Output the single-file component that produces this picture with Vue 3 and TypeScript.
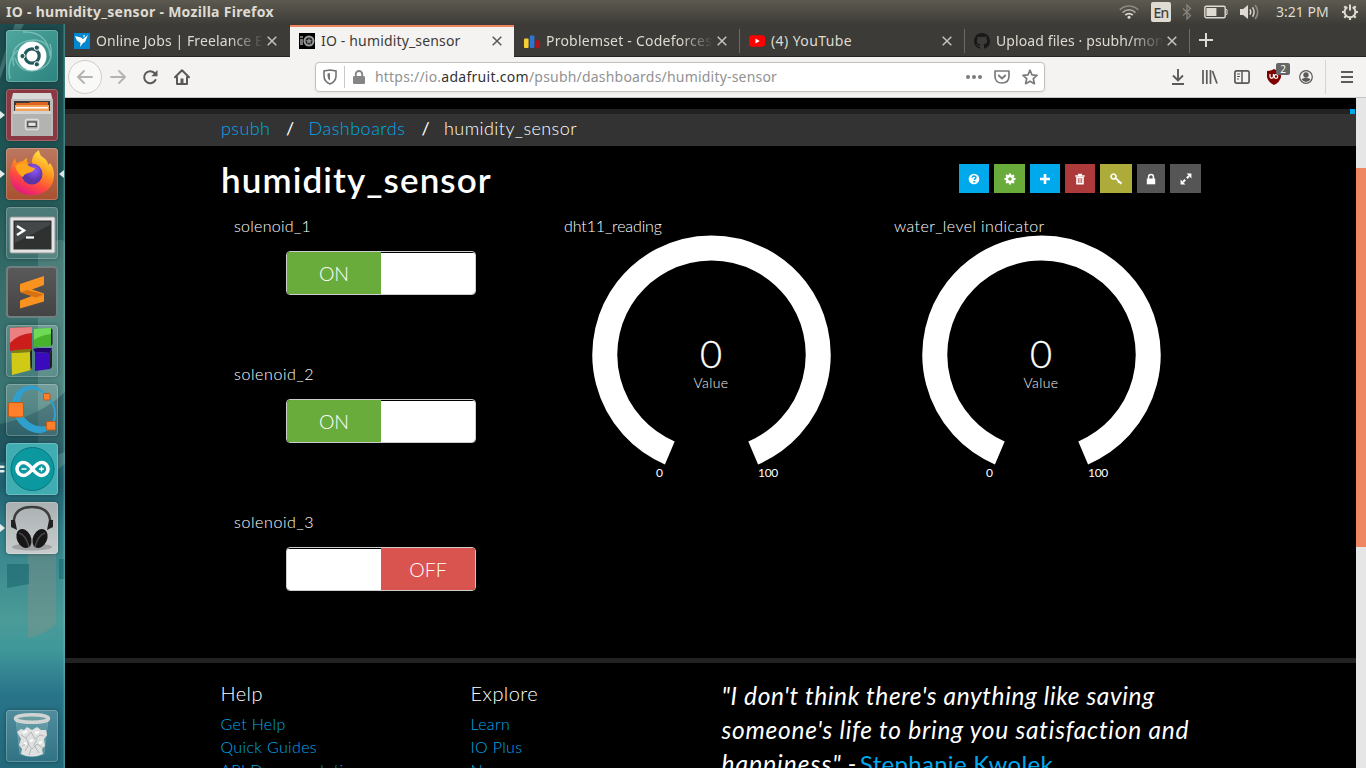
<script setup lang="ts">
interface Tab { title: string; icon: string; active?: boolean; sep?: boolean; fade?: boolean; cls: string }
interface Toggle { name: string; on: boolean }
interface Action { icon: string; cls: string }
interface Gauge { name: string; cls: string }

const tabs: Tab[] = [
  { title: 'Online Jobs | Freelance E', icon: 'freelancer', fade: true, cls: 'snug' },
  { title: 'IO - humidity_sensor', icon: 'io', active: true, cls: 'normal' },
  { title: 'Problemset - Codeforces', icon: 'codeforces', sep: true, fade: true, cls: 'airy' },
  { title: '(4) YouTube', icon: 'youtube', sep: true, cls: 'loose' },
  { title: 'Upload files · psubh/mon', icon: 'github', sep: true, fade: true, cls: 'snug' },
]
const apps = ['dash', 'files', 'firefox', 'terminal', 'sublime', 'blocks', 'octave', 'arduino', 'audio']
const running: Record<string, number> = { files: 1, firefox: 1, arduino: 2, audio: 1 }
const toggles: Toggle[] = [
  { name: 'solenoid_1', on: true },
  { name: 'solenoid_2', on: true },
  { name: 'solenoid_3', on: false },
]
const gauges: Gauge[] = [
  { name: 'dht11_reading', cls: 'tight' },
  { name: 'water_level indicator', cls: 'wide' },
]
const actions: Action[] = [
  { icon: 'help', cls: 'blue w30' },
  { icon: 'gear', cls: 'green w31' },
  { icon: 'plus', cls: 'blue w30' },
  { icon: 'trash', cls: 'red w30' },
  { icon: 'key', cls: 'olive w32' },
  { icon: 'lock', cls: 'grey w28' },
  { icon: 'expand', cls: 'grey w31' },
]
const help = ['Get Help', 'Quick Guides', 'API Documentation']
const explore = ['Learn', 'IO Plus', 'News']
</script>

<template>
  <div class="desktop">
    <header class="panel">
      <span class="win-title">IO - humidity_sensor - Mozilla Firefox</span>
      <div class="tray">
        <svg class="wifi" width="20" height="14" viewBox="0 0 20 14" fill="none" stroke-width="1.7">
          <path d="M.8 4.8a13 13 0 0 1 18.4 0" stroke="#8d8a80" />
          <path d="M3.6 7.6a9 9 0 0 1 12.8 0" stroke="#a9a69d" />
          <path d="M6.3 10.2a5.2 5.2 0 0 1 7.4 0" stroke="#dfdbd2" />
          <circle cx="10" cy="12.2" r="1.5" fill="#dfdbd2" />
        </svg>
        <span class="lang">En</span>
        <svg class="bt" width="10" height="16" viewBox="0 0 10 16" fill="none" stroke="#88857b" stroke-width="1.3"><path d="M1 4.5l7.5 7L5 15V1l3.5 3.5-7.5 7" /></svg>
        <svg class="batt" width="24" height="14" viewBox="0 0 24 14"><rect x=".8" y="1.3" width="20.4" height="11.4" rx="1.5" fill="none" stroke="#dfdbd2" stroke-width="1.4" /><rect x="2.4" y="3" width="10" height="8" fill="#dfdbd2" /><path d="M22.300 4.500h.7v5h-.7" fill="none" stroke="#dfdbd2" /></svg>
        <svg class="vol" width="20" height="18" viewBox="0 0 20 18" fill="none" stroke-width="1.6"><path d="M0 6h3.200L8 2v14l-4.800-4H0z" fill="#dfdbd2" /><path d="M10 6.400q1.600 2.600 0 5.200" stroke="#dfdbd2" /><path d="M12.500 4.200q3.200 4.800 0 9.600" stroke="#c9c5bc" /><path d="M15.200 2q5 7 0 14" stroke="#8d8a80" /></svg>
        <span class="clock">3:21 PM</span>
        <svg class="power" width="18" height="18" viewBox="0 0 18 18" fill="none" stroke="#dfdbd2"><path d="M6.400 4.100a5.400 5.400 0 1 0 5.200 0M9 1.500v6" stroke-width="2" /><path d="M1 9h2.500M14.500 9H17M3.300 3.300l1.700 1.700M14.700 3.300L13 5M3.300 14.700L5 13M14.700 14.700L13 13M9 14.500V17" stroke-width="2.200" /></svg>
      </div>
    </header>

    <div class="workspace">
      <aside class="launcher">
        <svg class="wallpaper" width="65" height="744" viewBox="0 0 65 744" preserveAspectRatio="none">
          <path d="M0 55Q12 20 24 0h-9Q6 22 0 44z" fill="#7fb3ae" opacity=".35" />
          <path d="M38 230q20-20 27-12V440L38 460z" fill="#a9cdc5" opacity=".22" />
          <path d="M0 400q40-8 65-32v60q-30 14-65 10z" fill="#123f4b" opacity=".45" />
          <path d="M28 530h28v70q-14 12-28 14z" fill="#a08f80" opacity=".3" />
          <path d="M7 540h22v20l-22 4zM59 535h6v20h-6z" fill="#1b6870" opacity=".6" />
          <rect x="63.500" width="1.500" height="744" fill="#7cc7c9" opacity=".4" />
        </svg>
        <div v-for="a in apps" :key="a" class="tile" :class="'app-' + a">
          <svg width="52" height="52" viewBox="0 0 52 52">
            <template v-if="a === 'dash'">
              <g fill="none" stroke="#a7dfd6" stroke-width="1.500" opacity=".5"><path d="M8 36Q2 12 28 10q14 0 17 16M44 14q6 24-18 27-13 0-17-13M17 2q25-1 27 24M4 49Q0 30 12 20" /></g>
              <circle cx="26" cy="26" r="14.500" fill="#fff" />
              <circle cx="26" cy="26" r="7.200" fill="none" stroke="#22595a" stroke-width="3.200" />
              <g fill="#22595a" stroke="#fff" stroke-width="1"><circle cx="16.500" cy="26" r="2.600" /><circle cx="30.800" cy="17.700" r="2.600" /><circle cx="30.800" cy="34.300" r="2.600" /></g>
            </template>
            <template v-else-if="a === 'files'">
              <path d="M7 4h38l2 9H5z" fill="#d8d8d6" /><path d="M5 10h42v37H5z" fill="#bcbcba" />
              <path d="M8 12h36v11H8z" fill="#3a3a3a" /><path d="M10 14h13l1-1h18v10H10z" fill="#df6420" /><path d="M9 16h34v7H9z" fill="#f4a25b" /><path d="M10 18h32v1.500H10z" fill="#fff" />
              <path d="M7 22h38v25H7z" fill="#b3b3b1" /><path d="M7 22h38v3H7z" fill="#d3d3d1" />
              <rect x="19.500" y="30.500" width="13" height="10" rx="2" fill="#a9a9a7" stroke="#dededc" stroke-width="1.500" /><rect x="21.800" y="33" width="8.400" height="4.500" fill="#e6e6e4" stroke="#444" stroke-width="1.200" />
            </template>
            <template v-else-if="a === 'firefox'">
              <defs>
                <linearGradient id="ff" x1=".8" y1="0" x2=".3" y2="1"><stop offset="0" stop-color="#fff14a" /><stop offset=".4" stop-color="#ff9a1e" /><stop offset=".7" stop-color="#ff4a3c" /><stop offset="1" stop-color="#e31587" /></linearGradient>
                <radialGradient id="ffg" cx=".6" cy=".3"><stop offset="0" stop-color="#9059ff" /><stop offset="1" stop-color="#5a35a8" /></radialGradient>
              </defs>
              <path d="M9 10q0 3 2 5 3-2 6-2 3-3 4-3-1 4 2 6l3 0q-1-9 7-14 0 5 5 8 4 3 4 7l2-2q4 5 4 12c0 13-10 20-22 20S4 40 4 27q0-9 5-17z" fill="url(#ff)" />
              <circle cx="26" cy="26" r="10.500" fill="url(#ffg)" />
              <path d="M9 18q6-5 12-2 2 3 8 4-1 4-7 5-4 1-5 4-5-2-8-11z" fill="#ffa51c" />
            </template>
            <template v-else-if="a === 'terminal'">
              <rect x="4" y="10" width="45" height="36" rx="1.500" fill="#e4e4e4" stroke="#999" /><rect x="7.500" y="13.500" width="38" height="29" fill="#2f3131" /><path d="M9 15h35v3L9 36z" fill="#444747" />
              <path d="M11 19l7 4.500-7 4.500" fill="none" stroke="#fff" stroke-width="2.500" /><path d="M20 30.500h8" stroke="#fff" stroke-width="2.200" />
            </template>
            <template v-else-if="a === 'sublime'">
              <path d="M14 18l24-8v9l-12 4.500 12 4v8l-24 7v-8l13-5-13-4z" fill="#f9921e" /><path d="M14 26.500l7-2.500 17 4.500-8 3z" fill="#d8710f" />
            </template>
            <template v-else-if="a === 'blocks'">
              <path d="M4 3l22-1v22l-22 2z" fill="#cc1d1d" /><path d="M4 3l22-1v6Q12 9 4 18z" fill="#ea8080" /><path d="M28 4l17-1v18l-17 1z" fill="#47b32d" /><path d="M28 4l17-1v6q-10 1-17 6z" fill="#6ddb58" />
              <path d="M5.500 28l19-1 .500 18L6 50z" fill="#d0ca17" /><path d="M5.500 28l3-3 18-1-2 3z" fill="#827d08" /><path d="M29 27l15 1v16l-15 2z" fill="#3a0bbd" /><path d="M29 27l-2-3 5-1h14l-2 5z" fill="#220471" /><path d="M45 3l1.500 2v14l-1.500 2zM26 24v18l-1.500 3-.5-18zM44 28l2-4v18l-2 2z" fill="#202020" />
            </template>
            <template v-else-if="a === 'octave'">
              <path d="M25 1.500C10 3 4 14 7 27s16 23 28 22c8-1 16-9 15-20 0-12-9-20-17-25-4-2-6-2-8-2.500zm0 4c14-1 23 14 23 24 0 9-5 13-12 13C24 42 15 33 14 22 13 12 18 6 25 5.500z" fill="#2f9fcd" fill-rule="evenodd" />
              <g fill="#ff7f2a" stroke="#c55811"><rect x="2.500" y="18.500" width="15" height="14.500" rx="2" /><rect x="37.500" y="9.500" width="6.500" height="6.500" rx="1" /><rect x="40.500" y="37.500" width="9" height="8.500" rx="1" /></g>
            </template>
            <template v-else-if="a === 'arduino'">
              <circle cx="26.500" cy="26" r="21.500" fill="#0b989f" stroke="#07767d" />
              <path d="M26.500 26c-4-5-6.500-6.500-9-6.500a6.500 6.500 0 0 0 0 13c2.500 0 5-1.500 9-6.500 4-5 6.500-6.500 9-6.500a6.500 6.500 0 0 1 0 13c-2.500 0-5-1.500-9-6.500z" fill="none" stroke="#fff" stroke-width="3.600" />
              <path d="M15.500 26h5M33 26h5M35.500 23.500v5" stroke="#fff" stroke-width="1.400" />
            </template>
            <template v-else>
              <ellipse cx="26" cy="45" rx="20" ry="3.500" fill="#888" opacity=".6" />
              <path d="M7.500 24C7 10 14 5 26 5s19 5 18.500 19" fill="none" stroke="#3d3d3d" stroke-width="2.500" /><path d="M5 18h4l2 10-6-3zM47 18h-4l-2 10 6-3z" fill="#222" />
              <ellipse cx="18" cy="36.500" rx="7" ry="10" transform="rotate(-25 18 36.500)" fill="#171717" /><ellipse cx="34" cy="36.500" rx="7" ry="10" transform="rotate(25 34 36.500)" fill="#171717" />
              <path d="M13 31q7 2 10 14M39 31q-7 2-10 14" stroke="#4a4a4a" fill="none" stroke-width="1.500" />
            </template>
          </svg>
          <svg v-if="running[a]" class="pip" width="5" height="10" viewBox="0 0 5 10" fill="#e4ebea"><path v-if="running[a] === 1" d="M0 1l5 4-5 4z" /><path v-else d="M0 1.500h3.500L5 3 3.500 4H0zM0 6h3.500L5 7 3.500 8.500H0z" /></svg>
          <svg v-if="a === 'firefox'" class="focus" width="5" height="10" viewBox="0 0 5 10" fill="#dce5e4"><path d="M5 1L0 5l5 4z" /></svg>
        </div>
        <div class="tile trash-tile">
          <svg width="52" height="52" viewBox="0 0 52 52">
            <path d="M10 9l4 35q12 5 24 0l4-35z" fill="#8fc0c2" opacity=".35" stroke="#b9d6d6" />
            <path d="M11 22l4-3 3 1 3-3 5 3 5-3 4 3 5 0 1 5-3 4 1 7-3 3 1 5q-11 5-22 0l1-5-3-4 2-6z" fill="#dfe1e0" /><path d="M15 25l5 3 5-6 4 7 5-4 4 1M16 36l5-3 5 6 5-5 6 4M20 28l3 6-4 7M31 29l-3 6 5 8M25 39l-2 6" stroke="#b3b8b7" fill="none" /><path d="M17 23l4-2M29 23l4-1M18 33l3 1M33 33l3-1M24 31l3-1" stroke="#fff" stroke-width="2" />
            <ellipse cx="26" cy="8.500" rx="16.500" ry="3.800" fill="#6b9ba0" stroke="#d0d4d3" stroke-width="3.500" />
          </svg>
        </div>
      </aside>

      <section class="window">
        <nav class="tabs">
          <div v-for="t in tabs" :key="t.title" class="tab" :class="{ active: t.active, sep: t.sep }">
            <svg width="16" height="16" viewBox="0 0 16 16">
              <template v-if="t.icon === 'freelancer'"><path d="M0 0h16v16H0z" fill="#0087cf" /><path d="M1 3l6 1.500L9 6l5-4-3 7-2 1-3 4 .5-4L3 7.500z" fill="#fff" /><path d="M9 2.500l2-.5-1 3z" fill="#fff" /></template>
              <template v-else-if="t.icon === 'io'"><path d="M0 0h16v16H0z" /><path d="M1 3h3v2H1zM1 6h3v6H1z" fill="#777" /><circle cx="10" cy="8" r="4.500" fill="#222" stroke="#999" stroke-width="2" /><path d="M10 5l1 2 2 .3-1.500 1.500.5 2-2-1-2 1 .5-2L7 7.300 9 7z" fill="#888" /></template>
              <template v-else-if="t.icon === 'codeforces'"><rect x="0" y="5.500" width="4.600" height="9.500" rx="1" fill="#f6cf35" /><rect x="5.800" y="2.500" width="4.600" height="12.500" rx="1" fill="#2f74d0" /><rect x="11.500" y="7.500" width="4.500" height="7.500" rx="1" fill="#b31318" /></template>
              <template v-else-if="t.icon === 'youtube'"><rect y="2.300" width="16" height="11.400" rx="3" fill="#f00" /><path d="M6.500 5.500v5L10.700 8z" fill="#fff" /></template>
              <path v-else fill="#191717" d="M8 0C3.580 0 0 3.580 0 8c0 3.540 2.290 6.530 5.470 7.590.4.070.55-.17.55-.38 0-.19-.01-.82-.01-1.490-2.010.37-2.530-.49-2.690-.94-.09-.23-.48-.94-.82-1.130-.28-.15-.68-.52-.01-.53.63-.01 1.080.58 1.230.82.72 1.210 1.870.87 2.330.66.07-.52.28-.87.51-1.070-1.780-.2-3.640-.89-3.640-3.950 0-.87.31-1.590.82-2.150-.08-.2-.36-1.020.08-2.120 0 0 .67-.21 2.200.82.64-.18 1.320-.27 2-.27s1.360.09 2 .27c1.530-1.040 2.200-.82 2.200-.82.44 1.100.16 1.920.08 2.120.51.56.82 1.270.82 2.150 0 3.070-1.870 3.750-3.650 3.950.29.25.54.73.54 1.480 0 1.070-.01 1.930-.01 2.200 0 .21.15.46.55.38A8.013 8.013 0 0 0 16 8c0-4.420-3.580-8-8-8z" />
            </svg>
            <span class="tab-title" :class="[t.cls, { fade: t.fade }]">{{ t.title }}</span>
            <svg class="close" width="10" height="10" viewBox="0 0 10 10" fill="none" stroke="currentColor" stroke-width="1.500"><path d="M.7.700l8.600 8.600M9.300.700L.7 9.300" /></svg>
          </div>
          <svg class="new-tab" width="14" height="14" viewBox="0 0 14 14" stroke="#dfdbd2" stroke-width="2"><path d="M7 0v14M0 7h14" /></svg>
        </nav>

        <div class="toolbar">
          <span class="back"><svg width="16" height="16" viewBox="0 0 16 16" fill="none" stroke="#b5b3b0" stroke-width="1.800" stroke-linecap="round" stroke-linejoin="round"><path d="M15 8H1.500M7 2L1 8l6 6" /></svg></span>
          <svg class="fwd" width="16" height="16" viewBox="0 0 16 16" fill="none" stroke="#b5b3b0" stroke-width="1.800" stroke-linecap="round" stroke-linejoin="round"><path d="M1 8h13.500M9 2l6 6-6 6" /></svg>
          <svg class="reload" width="16" height="16" viewBox="0 0 16 16" fill="none" stroke="#5b5a58" stroke-width="2" stroke-linecap="round"><path d="M13.500 11A6 6 0 1 1 12.500 4" /><path d="M15.500 1v6.200H9.300z" fill="#5b5a58" stroke="none" /></svg>
          <svg class="home" width="16" height="16" viewBox="0 0 16 16" fill="none" stroke="#5b5a58" stroke-width="2" stroke-linejoin="round" stroke-linecap="round"><path d="M1 8.200L8 1.200l7 7M3 8v7h10V8" /><path d="M6.500 9.500h3V14h-3z" fill="#5b5a58" stroke="none" /></svg>
          <div class="url">
            <svg class="shield" width="14" height="16" viewBox="0 0 14 16" fill="none" stroke="#747474" stroke-width="1.600"><path d="M7 1Q10 1.500 13 2v5q0 5.500-6 8-6-2.500-6-8V2Q4 1.500 7 1z" /><path d="M7 4v7.500Q4.500 10 4.500 7V4.500z" fill="#747474" stroke="none" /></svg>
            <i class="bar"></i>
            <svg class="padlock" width="12" height="14" viewBox="0 0 12 14"><rect y="6" width="12" height="8" rx="1.300" fill="#858585" /><path d="M2.800 7V4.200a3.200 3.200 0 0 1 6.400 0V7" fill="none" stroke="#858585" stroke-width="1.900" /></svg>
            <span class="addr">https://io.<b>adafruit.com</b>/psubh/dashboards/humidity-sensor</span>
            <svg class="dots" width="16" height="4" viewBox="0 0 16 4" fill="#7b7b7b"><circle cx="2" cy="2" r="2" /><circle cx="8" cy="2" r="2" /><circle cx="14" cy="2" r="2" /></svg>
            <svg class="pocket" width="16" height="14" viewBox="0 0 16 14" fill="none" stroke="#7b7b7b" stroke-linecap="round" stroke-linejoin="round"><path d="M1 1h14v5q0 7-7 7T1 6z" stroke-width="1.700" /><path d="M4.800 5.500L8 8.500l3.200-3" stroke-width="1.900" /></svg>
            <svg class="star" width="16" height="16" viewBox="0 0 16 16" fill="none" stroke="#7b7b7b" stroke-width="1.700" stroke-linejoin="round"><path d="M8 1.200l2 4.600 5 .5-3.700 3.400 1.100 5L8 12.200l-4.400 2.500 1.100-5L1 6.300l5-.5z" /></svg>
          </div>
          <svg class="dl" width="14" height="16" viewBox="0 0 14 16" fill="none" stroke="#5b5a58" stroke-width="1.900"><path d="M7 0v11M2 6.500l5 5 5-5M1 15h12" /></svg>
          <svg class="lib" width="16" height="14" viewBox="0 0 16 14" fill="none" stroke="#5b5a58" stroke-width="1.700"><path d="M1 0v14M4.800 0v14M8.500 0v14M10.500 1L15 13.500" /></svg>
          <svg class="side" width="16" height="14" viewBox="0 0 16 14" fill="none" stroke="#5b5a58"><rect x=".9" y=".9" width="14.200" height="12.200" rx="1.800" stroke-width="1.700" /><path d="M8 1v12" stroke-width="1.500" /><path d="M3 4h3M3 6.500h3M3 9h2" stroke-width="1" /></svg>
          <span class="ublock">
            <svg width="14" height="16" viewBox="0 0 14 16"><path d="M7 0q3 2 7 2v6q-1 5-7 8-6-3-7-8V2q4 0 7-2z" fill="#800000" /><path d="M3 5v2.500a1.700 1.700 0 0 0 3.400 0V5" fill="none" stroke="#fff" stroke-width="1.200" /><circle cx="9" cy="7.500" r="1.800" fill="none" stroke="#fff" stroke-width="1.200" /></svg>
            <em>2</em>
          </span>
          <svg class="acct" width="14" height="14" viewBox="0 0 14 14"><circle cx="7" cy="7" r="6.300" fill="none" stroke="#5b5a58" stroke-width="1.200" /><circle cx="7" cy="5" r="2.700" fill="#5b5a58" /><path d="M2.500 9.300q2-1.800 4.500-1.300 2.500-.5 4.500 1.300-1.500 2.700-4.500 2.700T2.500 9.300z" fill="#5b5a58" /></svg>
          <i class="tsep"></i>
          <svg class="menu" width="12" height="12" viewBox="0 0 12 12" stroke="#5b5a58" stroke-width="1.800"><path d="M0 1h12M0 6h12M0 11h12" /></svg>
        </div>

        <div class="viewport">
          <main class="page">
            <div class="rule"><i></i></div>
            <div class="crumbs"><a class="c1">psubh</a><span class="slash">/</span><a class="c2">Dashboards</a><span class="slash">/</span><span class="here">humidity_sensor</span></div>
            <div class="head">
              <h1>humidity_sensor</h1>
              <div class="actions">
                <button v-for="(b, i) in actions" :key="i" :class="b.cls">
                  <svg width="12" height="12" viewBox="0 0 12 12" fill="#fff">
                    <template v-if="b.icon === 'help'"><circle cx="6" cy="6" r="5.300" /><path d="M4 4.600q.3-1.600 2-1.600t2 1.500c0 1-1.700 1.200-1.700 2.600M5.300 8.800h2" fill="none" stroke="#00a9ec" stroke-width="1.500" /></template>
                    <template v-else-if="b.icon === 'gear'"><circle cx="6" cy="6" r="3" fill="none" stroke="#fff" stroke-width="2.400" /><path d="M6 .5v2M6 9.500v2M.5 6h2M9.500 6h2M2.100 2.100l1.400 1.400M8.500 8.500l1.400 1.400M2.100 9.900l1.400-1.400M8.500 3.500l1.400-1.400" stroke="#fff" stroke-width="2.200" /></template>
                    <path v-else-if="b.icon === 'plus'" d="M4.700 1h2.600v3.700H11v2.600H7.300V11H4.700V7.300H1V4.700h3.700z" />
                    <template v-else-if="b.icon === 'trash'"><path d="M1.300 2.200h9.400v1.500H1.300zM4 .8h4v1.500H4zM2.200 4h7.600v7.500H2.200z" /><path d="M4.300 5v5M6 5v5M7.700 5v5" stroke="#ad3a3a" stroke-width=".8" /></template>
                    <path v-else-if="b.icon === 'key'" d="M5.200 4.800l6.100 5.500M7.900 9.600l1.600-1.700M10 11l1.500-1.600M3.500 1a2.500 2.500 0 1 0 .1 0z" fill="none" stroke="#fff" stroke-width="1.600" />
                    <template v-else-if="b.icon === 'lock'"><rect x="1.800" y="5.500" width="8.400" height="5.800" /><path d="M3.600 6V3.800a2.400 2.400 0 0 1 4.800 0V6" fill="none" stroke="#fff" stroke-width="1.500" /></template>
                    <template v-else><path d="M11.400.600v4.800L6.600.600zM.6 11.400V6.600l4.800 4.800z" /><path d="M3 9l2.200-2.200M6.800 5.200L9 3" stroke="#fff" stroke-width="2" /></template>
                  </svg>
                </button>
              </div>
            </div>

            <div class="board">
              <div class="col">
                <div v-for="(t, i) in toggles" :key="t.name" class="block">
                  <p class="label" :class="i ? 'roomy' : 'close-set'">{{ t.name }}</p>
                  <div class="toggle">
                    <span :class="t.on ? 'on' : 'blank'">{{ t.on ? 'ON' : '' }}</span>
                    <span :class="t.on ? 'blank' : 'off'">{{ t.on ? '' : 'OFF' }}</span>
                  </div>
                </div>
              </div>
              <div v-for="g in gauges" :key="g.name" class="col">
                <p class="label" :class="g.cls">{{ g.name }}</p>
                <div class="gauge">
                  <svg width="240" height="240" viewBox="0 0 240 240"><path d="M78.800 217.900A106.700 106.700 0 1 1 162.200 217.900" fill="none" stroke="#fff" stroke-width="25" /></svg>
                  <div class="reading"><strong>0</strong><span>Value</span></div>
                  <div class="range"><span>0</span><span>100</span></div>
                </div>
              </div>
            </div>

            <div class="rule"></div>
            <footer class="foot">
              <div class="links"><h4>Help</h4><a v-for="l in help" :key="l">{{ l }}</a></div>
              <div class="links"><h4>Explore</h4><a v-for="l in explore" :key="l">{{ l }}</a></div>
              <blockquote>
                <div class="q1">"I don't think there's anything like saving</div>
                <div class="q2">someone's life to bring you satisfaction and</div>
                <div class="q3"><span>happiness"</span><span class="hyphen">-</span><a>Stephanie Kwolek</a></div>
              </blockquote>
            </footer>
          </main>
          <div class="scroll"><i></i></div>
        </div>
      </section>
    </div>
  </div>
</template>

<style>
body { margin: 0; overflow: hidden; background: #000; }
</style>
<style scoped>
.desktop { width: 1366px; height: 768px; overflow: hidden; display: flex; flex-direction: column; font-family: "Noto Sans", "Open Sans", sans-serif; }
.desktop * { box-sizing: border-box; }
.desktop svg { display: block; flex: none; }
.panel { height: 24px; flex: none; display: flex; justify-content: space-between; padding: 0 7px 0 6px; background: linear-gradient(#5c5a50, #3d3c37); color: #dfdbd2; }
.win-title { font-size: 14px; font-weight: 700; line-height: 24px; white-space: nowrap; letter-spacing: .29px; }
.tray { display: flex; align-items: center; }
.lang { margin-left: 12px; width: 20px; height: 20px; border-radius: 2px; background: #dfdbd2; color: #3c3b37; font-size: 14px; line-height: 21px; text-align: center; letter-spacing: -.8px; -webkit-text-stroke: .2px #3c3b37; }
.bt { margin-left: 11px; }
.batt { margin-left: 12px; }
.vol { margin-left: 12px; }
.clock { margin-left: 16px; width: 53px; font-size: 14px; line-height: 24px; white-space: nowrap; }
.power { margin-left: 12px; }

.workspace { display: flex; flex: 1; min-height: 0; }
.launcher { position: relative; width: 65px; flex: none; display: flex; flex-direction: column; gap: 7px; padding: 6px 0 6px 6px; background: linear-gradient(#1d4a4c 0, #1f5655 20%, #386f6c 36%, #3a7573 51%, #206070 62%, #34808a 68%, #4b9b98 80%, #40989a 84%, #29748a 90%, #22697a 100%); }
.wallpaper { position: absolute; inset: 0; }
.tile { position: relative; width: 52px; height: 52px; flex: none; border-radius: 4px; background: linear-gradient(#ffffff30, #ffffff10); box-shadow: inset 0 0 0 1px #ffffff38, 0 0 4px #0005; }
.app-dash { background: linear-gradient(135deg, #4fa79f, #2d847f); }
.app-files { background: #8a3943; }
.app-firefox { background: linear-gradient(#bb7860, #a8512f); }
.app-sublime { background: linear-gradient(#5a5a5a, #434343); box-shadow: inset 0 0 0 2px #6e8180; }
.app-arduino { background: #3fadb1; }
.app-audio { background: linear-gradient(#a9b0b1, #c8cccd); }
.trash-tile { margin-top: auto; }
.pip { position: absolute; left: -6px; top: 21px; }
.focus { position: absolute; left: 53px; top: 21px; }

.window { flex: 1; min-width: 0; display: flex; flex-direction: column; }
.tabs { height: 33px; flex: none; display: flex; background: #3c3b37; border-bottom: 1px solid #262522; }
.tab { position: relative; width: 225px; height: 32px; display: flex; align-items: center; padding: 2px 13px 0 9px; color: #dfdbd2; }
.tab.sep::after { content: ""; position: absolute; right: 0; top: 5px; width: 1px; height: 24px; background: #6c6b67; }
.tab.active { width: 224px; height: 32px; margin: 1px 1px 0 0; padding: 0 12px 2px 9px; color: #3c3b37; background: #f4f3f2; border-top: 2px solid #f0835a; }
.tab-title { margin-left: 6px; width: 166px; overflow: hidden; white-space: nowrap; font-size: 14px; line-height: 20px; }
.snug { letter-spacing: .1px; }
.normal { letter-spacing: .16px; }
.airy { letter-spacing: .22px; }
.loose { letter-spacing: .4px; }
.fade { mask-image: linear-gradient(90deg, #000 134px, transparent 168px); }
.close { margin-left: auto; opacity: .85; }
.new-tab { margin: 9px 0 0 9px; }

.toolbar { height: 41px; flex: none; display: flex; align-items: center; background: #f4f3f2; border-bottom: 1px solid #c6c4c1; padding-left: 3px; }
.back { width: 34px; height: 34px; border: 1px solid #cfcdca; border-radius: 50%; display: grid; place-items: center; background: #f9f9f8; }
.fwd { margin-left: 8px; }
.reload { margin-left: 16px; }
.home { margin-left: 16px; }
.url { width: 730px; height: 30px; margin-left: 125px; display: flex; align-items: center; background: #fff; border: 1px solid #c3c1be; border-radius: 4px; box-shadow: 0 1px 3px #0001; padding-left: 7px; }
.bar { width: 1px; height: 22px; background: #c9c9c9; margin-left: 7px; }
.padlock { margin-left: 8px; }
.addr { margin-left: 10px; width: 582px; font-size: 14px; color: #929292; white-space: nowrap; line-height: 22px; letter-spacing: .2px; }
.addr b { font-weight: 400; color: #333; letter-spacing: .28px; }
.dots { margin-left: 9px; }
.pocket { margin-left: 12px; }
.star { margin-left: 12px; }
.dl { margin-left: 126px; }
.lib { margin-left: 17px; }
.side { margin-left: 16px; }
.ublock { position: relative; margin-left: 17px; }
.ublock em { position: absolute; left: 9px; top: -6px; width: 14px; height: 12px; border-radius: 2px; background: #666; color: #fff; font: 10px/12px "Noto Sans", sans-serif; text-align: center; }
.acct { margin-left: 18px; }
.tsep { width: 1px; height: 34px; background: #d6d4d1; margin-left: 12px; }
.menu { margin-left: 15px; }

.viewport { flex: 1; display: flex; min-height: 0; }
.page { flex: 1; background: #000; padding-top: 11px; overflow: hidden; font-family: Lato, sans-serif; font-weight: 300; color: #fff; }
.scroll { width: 10px; background: #e6e6e6; padding-top: 70px; }
.scroll i { display: block; height: 379px; background: #f08763; }
.rule { height: 5px; background: #222; }
.rule i { display: block; width: 5px; height: 5px; margin-left: auto; margin-right: 1px; background: #00a9ec; }
.page a { color: #00a9ec; }
.crumbs { height: 32px; background: #333; padding-left: 156px; display: flex; font-size: 18px; line-height: 29px; letter-spacing: .43px; }
.crumbs a, .here { flex: none; }
.c1 { width: 65px; }
.c2 { width: 113px; letter-spacing: .5px; }
.slash { width: 22.5px; font-weight: 400; }
.head { height: 60px; display: flex; justify-content: space-between; padding: 0 155px 0 156px; }
h1 { margin: 0; font: 600 35px/66px Lato, sans-serif; white-space: nowrap; letter-spacing: 1.1px; }
.actions { display: flex; gap: 5px; padding-top: 18px; }
button { height: 29px; border: 0; padding: 0; display: grid; place-items: center; }
.w30 { width: 30px; }
.w31 { width: 31px; }
.w32 { width: 32px; }
.w28 { width: 28px; }
.blue { background: #00a9ec; }
.green { background: #69ac3c; }
.red { background: #ad3a3a; }
.olive { background: #adab3a; }
.grey { background: #555; }
.board { height: 452px; display: grid; grid-template-columns: 330px 330px 330px; padding-left: 155px; }
.block { height: 148px; }
.label { margin: 0; height: 29px; padding: 9px 0 0 14px; font-size: 16px; line-height: 22px; white-space: nowrap; }
.close-set { letter-spacing: .28px; }
.roomy { letter-spacing: .6px; }
.tight { letter-spacing: -.12px; }
.wide { letter-spacing: .4px; }
.toggle { width: 190px; height: 44px; margin: 16px 0 0 66px; border: 1px solid #ccc; border-radius: 4px; display: grid; grid-template-columns: 94px 94px; overflow: hidden; font-size: 19.5px; line-height: 43px; text-align: center; }
.on { background: #69ac3c; }
.off { background: #d9534f; }
.blank { background: #fff; margin-top: 1px; }
.gauge { display: grid; width: 240px; margin-left: 41px; }
.gauge > svg, .reading { grid-area: 1 / 1; }
.reading { display: flex; flex-direction: column; align-items: center; padding-top: 94px; }
.reading strong { font-weight: 300; font-size: 38px; line-height: 48px; -webkit-text-stroke: .4px #fff; }
.reading span { margin-top: -1px; font-size: 14px; line-height: 14px; color: #f0f0f0; letter-spacing: .4px; }
.range { display: flex; justify-content: space-between; padding: 0 53px 0 65px; margin-top: -9px; font-size: 12px; line-height: 14px; font-weight: 400; letter-spacing: -.3px; }
.foot { display: grid; grid-template-columns: 250px 251px 500px; padding: 17px 0 0 155.5px; }
.links { display: flex; flex-direction: column; font-size: 16px; line-height: 23px; letter-spacing: .35px; }
h4 { margin: 0 0 6px; font-weight: 300; font-size: 20px; line-height: 26px; letter-spacing: .45px; }
blockquote { margin: -1px 0 0; font-size: 24.5px; line-height: 34px; font-style: italic; font-weight: 400; white-space: nowrap; }
.q1 { letter-spacing: .61px; }
.q2 { letter-spacing: .75px; }
.q3 span { letter-spacing: 1.05px; }
.q3 .hyphen { display: inline-block; margin: 0 3px 0 6px; width: 9px; }
.q3 a { font-size: 24px; font-style: normal; letter-spacing: .3px; }
</style>
